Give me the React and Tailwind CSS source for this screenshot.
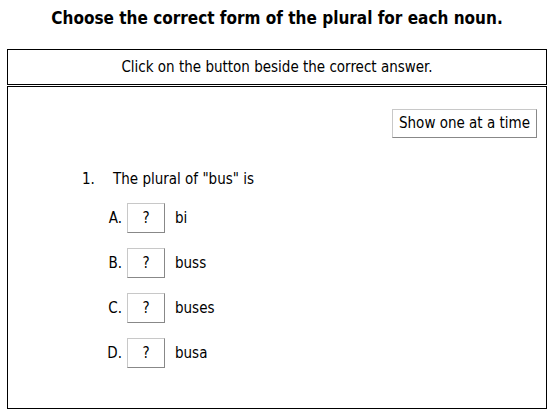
import React from 'react';

const answers = [
  { letter: 'A.', text: 'bi' },
  { letter: 'B.', text: 'buss' },
  { letter: 'C.', text: 'buses' },
  { letter: 'D.', text: 'busa' },
];

const App = () => {
  return (
    <div className="w-[554px] h-[413px] bg-white text-black overflow-hidden font-['DejaVu_Sans_Condensed','DejaVu_Sans',sans-serif] font-stretch-condensed">
      {/* title */}
      <h1 className="text-center font-bold text-[17px] leading-[20px] pt-[8px]">
        Choose the correct form of the plural for each noun.
      </h1>

      {/* instructions */}
      <div className="mx-[7px] mt-[21px] border border-black h-[36px] flex items-center justify-center text-[15px]">
        Click on the button beside the correct answer.
      </div>

      {/* question panel */}
      <div className="mx-[7px] mt-[1px] border border-black h-[323px] flex flex-col text-[15px]">
        <div className="flex justify-end pt-[22px] pr-[9px]">
          <button className="h-[29px] px-[6px] border border-t-[#c8c8c8] border-l-[#c8c8c8] border-r-[#888] border-b-[#888] bg-white text-[15px]">
            Show one at a time
          </button>
        </div>

        <div className="flex items-center mt-[32px] pl-[74px] leading-[18px]">
          <span className="w-[31px]">1.</span>
          <span>The plural of "bus" is</span>
        </div>

        <div className="flex flex-col gap-[15px] mt-[15px]">
          {answers.map((a) => (
            <div key={a.letter} className="flex items-center">
              <span className="w-[119px] text-right pr-[5px]">{a.letter}</span>
              <button className="w-[38px] h-[30px] border border-t-[#c8c8c8] border-l-[#c8c8c8] border-r-[#888] border-b-[#888] bg-white text-[15px]">
                ?
              </button>
              <span className="ml-[10px]">{a.text}</span>
            </div>
          ))}
        </div>
      </div>
    </div>
  );
};

export default App;
